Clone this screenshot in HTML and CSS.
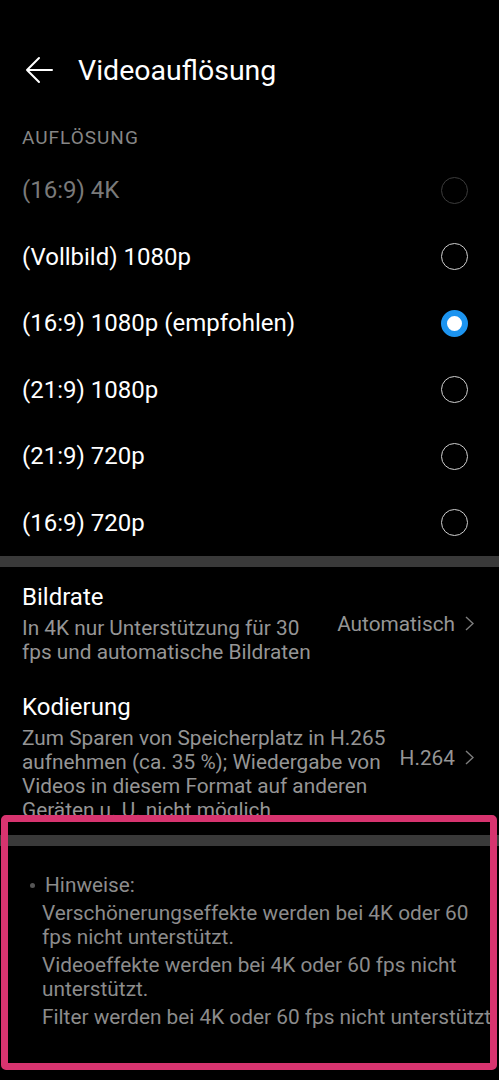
FILE: index.html
```html
<!DOCTYPE html>
<html lang="de">
<head>
    <meta charset="UTF-8">
    <meta name="viewport" content="width=device-width, initial-scale=1.0">
    <title>Videoauflösung</title>
    <link rel="stylesheet" href="styles.css">
</head>
<body>
    <header class="topbar">
        <svg class="back" viewBox="0 0 28 28" width="28" height="28">
            <path d="M27 14H2M14 2L2 14l12 12" fill="none" stroke="#fff" stroke-width="2" stroke-linecap="round" stroke-linejoin="round"/>
        </svg>
        <h1>Videoauflösung</h1>
    </header>

    <div class="section-label">AUFLÖSUNG</div>
    <div class="options">
        <div class="option disabled"><span>(16:9) 4K</span><span class="radio"></span></div>
        <div class="option"><span>(Vollbild) 1080p</span><span class="radio"></span></div>
        <div class="option"><span>(16:9) 1080p (empfohlen)</span><span class="radio checked"></span></div>
        <div class="option"><span>(21:9) 1080p</span><span class="radio"></span></div>
        <div class="option"><span>(21:9) 720p</span><span class="radio"></span></div>
        <div class="option"><span>(16:9) 720p</span><span class="radio"></span></div>
    </div>

    <div class="divider"></div>

    <div class="setting">
        <div class="setting-text">
            <div class="setting-title">Bildrate</div>
            <div class="setting-sub">In 4K nur Unterstützung für 30 fps und automatische Bildraten</div>
        </div>
        <div class="setting-value">Automatisch
            <svg class="chev" viewBox="0 0 9 15" width="9" height="15"><path d="M1 1l7 6.5L1 14" fill="none" stroke="#7d7d7d" stroke-width="1.4"/></svg>
        </div>
    </div>
    <div class="setting">
        <div class="setting-text">
            <div class="setting-title">Kodierung</div>
            <div class="setting-sub">Zum Sparen von Speicherplatz in H.265 aufnehmen (ca. 35 %); Wiedergabe von Videos in diesem Format auf anderen Geräten u. U. nicht möglich</div>
        </div>
        <div class="setting-value">H.264
            <svg class="chev" viewBox="0 0 9 15" width="9" height="15"><path d="M1 1l7 6.5L1 14" fill="none" stroke="#7d7d7d" stroke-width="1.4"/></svg>
        </div>
    </div>

    <div class="divider"></div>

    <div class="notes">
        <div class="notes-head"><span class="dot"></span>Hinweise:</div>
        <p>Verschönerungseffekte werden bei 4K oder 60 fps nicht unterstützt.</p>
        <p>Videoeffekte werden bei 4K oder 60 fps nicht unterstützt.</p>
        <p class="nowrap">Filter werden bei 4K oder 60 fps nicht unterstützt.</p>
    </div>

    <div class="highlight"></div>
</body>
</html>
```

FILE: styles.css
```css
body {
    margin: 0;
    background-color: #000;
    color: #fff;
    font-family: Roboto, "Noto Sans", sans-serif;
    width: 499px;
    height: 1080px;
    position: relative;
    overflow: hidden;
}
.topbar {
    display: flex;
    align-items: center;
    height: 40px;
    padding: 50px 0 0 25px;
}
.back {
    flex: none;
}
h1 {
    margin: 0 0 0 25px;
    font-size: 28.5px;
    font-weight: 400;
}
.section-label {
    margin-top: 36px;
    padding-left: 22px;
    font-size: 19px;
    letter-spacing: 1px;
    line-height: 24px;
    color: #868686;
}
.options {
    margin-top: 7px;
}
.option {
    display: flex;
    align-items: center;
    justify-content: space-between;
    height: 66.5px;
    padding: 0 31px 0 22px;
    font-size: 24px;
}
.option.disabled {
    color: #7a7a7a;
}
.radio {
    width: 27px;
    height: 27px;
    box-sizing: border-box;
    border: 1.5px solid #cfcfcf;
    border-radius: 50%;
}
.disabled .radio {
    border-color: #3c3c3c;
}
.radio.checked {
    border: 6.5px solid #1c94f0;
    background-color: #fff;
}
.divider {
    height: 11px;
    background-color: #393939;
}
.setting {
    display: flex;
    align-items: center;
    padding: 16px 25px 13px 22px;
}
.setting-text {
    flex: 1;
    min-width: 0;
}
.setting-title {
    font-size: 24px;
    line-height: 28px;
}
.setting-sub {
    margin-top: 5px;
    font-size: 20.8px;
    line-height: 24px;
    color: #959595;
}
.setting-value {
    display: flex;
    align-items: center;
    margin-left: 10px;
    font-size: 20.8px;
    color: #959595;
    white-space: nowrap;
}
.chev {
    margin-left: 10px;
}
.notes {
    margin-top: 27px;
    padding: 0 5px 0 30px;
    font-size: 20.8px;
    line-height: 24px;
    color: #8c8c8c;
}
.notes-head {
    display: flex;
    align-items: center;
}
.dot {
    width: 5px;
    height: 5px;
    margin-right: 10px;
    border-radius: 50%;
    background-color: #555;
}
.notes p {
    margin: 4px 0 0 12px;
}
.notes p.nowrap {
    white-space: nowrap;
}
.highlight {
    position: absolute;
    left: 1px;
    top: 815px;
    width: 496px;
    height: 255px;
    box-sizing: border-box;
    border: 7px solid #d7346f;
    border-radius: 5px;
    pointer-events: none;
}
```
